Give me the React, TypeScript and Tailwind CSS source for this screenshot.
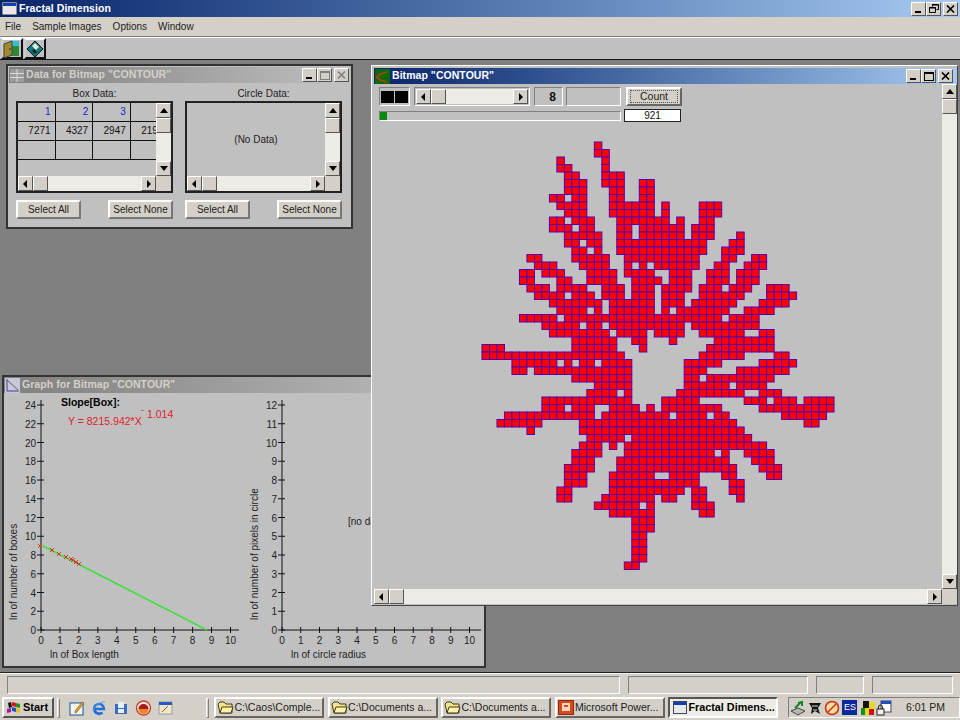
import type { ReactNode } from 'react'

const font = 'font-["Liberation_Sans",Arial,sans-serif]'

// fractal cells, one entry per row: [first column, last column] pairs
const cellRows: number[][] = [
  [15, 15],
  [15, 16],
  [10, 10, 16, 16],
  [10, 11, 16, 16],
  [11, 12, 16, 18],
  [11, 13, 16, 18, 21, 22],
  [11, 13, 17, 18, 21, 22],
  [9, 10, 12, 13, 17, 18, 21, 22],
  [10, 13, 17, 22, 24, 24, 29, 31],
  [11, 13, 17, 22, 24, 24, 29, 31],
  [9, 10, 12, 14, 18, 24, 26, 26, 29, 30],
  [9, 11, 13, 14, 18, 19, 21, 26, 28, 30],
  [11, 15, 18, 19, 21, 26, 28, 30, 34, 34],
  [11, 12, 14, 15, 18, 29, 33, 34],
  [12, 13, 15, 15, 18, 29, 32, 34],
  [6, 7, 12, 16, 19, 28, 32, 33, 36, 37],
  [7, 9, 13, 16, 19, 19, 21, 21, 23, 28, 31, 32, 35, 37],
  [5, 6, 8, 10, 14, 17, 19, 22, 25, 27, 30, 32, 34, 36],
  [5, 6, 10, 11, 14, 17, 20, 23, 25, 27, 30, 32, 34, 36],
  [6, 8, 10, 13, 16, 18, 20, 22, 24, 27, 29, 31, 33, 35, 38, 40],
  [7, 10, 12, 14, 16, 18, 20, 22, 24, 26, 29, 34, 38, 41],
  [9, 15, 17, 22, 24, 26, 28, 33, 37, 40],
  [10, 13, 15, 15, 17, 22, 24, 24, 26, 32, 35, 38],
  [5, 9, 11, 31, 33, 36],
  [8, 12, 14, 15, 17, 26, 28, 36],
  [9, 16, 18, 21, 23, 26, 29, 34, 37, 38],
  [12, 17, 20, 21, 25, 25, 31, 38],
  [0, 2, 12, 17, 21, 21, 30, 38],
  [0, 18, 29, 34, 39, 40],
  [4, 9, 11, 11, 13, 14, 16, 19, 27, 31, 37, 41],
  [4, 5, 7, 19, 27, 29, 34, 40],
  [12, 19, 27, 28, 30, 38],
  [15, 19, 27, 32, 34, 37],
  [14, 17, 19, 19, 26, 34, 37, 39],
  [8, 19, 24, 28, 35, 37, 39, 41, 43, 46],
  [8, 10, 12, 14, 17, 20, 22, 22, 24, 31, 37, 46],
  [3, 14, 16, 24, 26, 29, 31, 32, 40, 45],
  [2, 7, 13, 33, 43, 44],
  [6, 6, 13, 34],
  [14, 18, 20, 35],
  [13, 15, 17, 17, 19, 37],
  [12, 15, 19, 30, 32, 32, 35, 38],
  [12, 14, 18, 32, 36, 38],
  [11, 14, 18, 33, 37, 39],
  [11, 13, 17, 22, 25, 28, 32, 33, 38, 39],
  [11, 13, 17, 28, 33, 34],
  [10, 11, 17, 26, 28, 29, 33, 34],
  [10, 11, 16, 22, 24, 25, 28, 29, 34, 34],
  [15, 20, 22, 22, 28, 30],
  [17, 22, 29, 30],
  [20, 22],
  [20, 22],
  [20, 21],
  [20, 21],
  [20, 21],
  [20, 21],
  [19, 20],
]

const cells = cellRows.flatMap((ranges, row) => {
  const out: { c: number; r: number }[] = []
  for (let i = 0; i < ranges.length; i += 2) {
    for (let c = ranges[i]; c <= ranges[i + 1]; c++) out.push({ c, r: row })
  }
  return out
})

function Fractal() {
  return (
    <svg width="354" height="430" viewBox="0 0 354 430" className="absolute left-[107px] top-[57px]">
      {cells.map(({ c, r }) => (
        <rect
          key={`${c}-${r}`}
          x={c * 7.49 + 1}
          y={r * 7.5 + 1}
          width="7.49"
          height="7.5"
          fill="#ff0000"
          stroke="#5500b4"
          strokeWidth="1"
        />
      ))}
    </svg>
  )
}

const raised = 'border border-t-white border-l-white border-r-[#555] border-b-[#555]'
const sunken = 'border border-t-[#808080] border-l-[#808080] border-r-white border-b-white'

type Dir = 'up' | 'down' | 'left' | 'right'

function Arrow({ dir }: { dir: Dir }) {
  const pts = {
    up: '4,1 8,6 0,6',
    down: '0,1 8,1 4,6',
    left: '5,0 5,8 1,4',
    right: '2,0 2,8 6,4',
  }[dir]
  return (
    <svg width="8" height="8" viewBox="0 0 8 8">
      <polygon points={pts} fill="#000" />
    </svg>
  )
}

function ArrowBtn({ dir }: { dir: Dir }) {
  return (
    <div className={`flex h-[15px] w-[15px] shrink-0 items-center justify-center bg-[#d4d0c8] ${raised}`}>
      <Arrow dir={dir} />
    </div>
  )
}

function VScroll() {
  return (
    <div className="flex h-full w-[15px] shrink-0 flex-col bg-[#ecebe6]">
      <ArrowBtn dir="up" />
      <div className={`h-[15px] w-[15px] shrink-0 bg-[#d4d0c8] ${raised}`} />
      <div className="flex-1" />
      <ArrowBtn dir="down" />
    </div>
  )
}

function HScroll() {
  return (
    <div className="flex h-[15px] w-full shrink-0 bg-[#ecebe6]">
      <ArrowBtn dir="left" />
      <div className={`h-[15px] w-[15px] shrink-0 bg-[#d4d0c8] ${raised}`} />
      <div className="flex-1" />
      <ArrowBtn dir="right" />
    </div>
  )
}

function CaptionBtns({ active, restore }: { active: boolean; restore?: boolean }) {
  const ink = active ? '#000' : '#808080'
  return (
    <div className="flex items-center">
      <div className={`flex h-[14px] w-[15px] items-end justify-start bg-[#d4d0c8] pb-[2px] pl-[3px] ${raised}`}>
        <div className="h-[2px] w-[6px] bg-black" />
      </div>
      <div className={`flex h-[14px] w-[15px] items-center justify-center bg-[#d4d0c8] ${raised}`}>
        {restore ? (
          <svg width="10" height="9" viewBox="0 0 10 9" fill="none" stroke="#000">
            <path d="M3.5 2.5V.5h6v5H7.5" />
            <path d="M.5 3.5h6v5h-6z" />
            <path d="M3 1h6M0 4h7" />
          </svg>
        ) : (
          <div className="h-[9px] w-[10px] border border-t-2" style={{ borderColor: ink }} />
        )}
      </div>
      <div className={`ml-[2px] flex h-[14px] w-[15px] items-center justify-center bg-[#d4d0c8] ${raised}`}>
        <svg width="9" height="8" viewBox="0 0 9 8" stroke={ink} strokeWidth="1.6">
          <path d="M1 .5l7 7M8 .5l-7 7" />
        </svg>
      </div>
    </div>
  )
}

function Titlebar({ title, active, icon, restore, className }: { title: string; active: boolean; icon: ReactNode; restore?: boolean; className: string }) {
  return (
    <div className={`flex items-center justify-between pl-[1px] ${className} ${active ? 'bg-gradient-to-r from-[#0a246a] to-[#a6caf0] text-white' : 'bg-gradient-to-r from-[#808080] to-[#c0c0c0] text-[#d4d0c8]'}`}>
      <div className="flex items-center gap-[2px] text-[10.5px] font-bold tracking-[0.05px]">
        {icon}
        <span>{title}</span>
      </div>
      <CaptionBtns active={active} restore={restore} />
    </div>
  )
}

function WinBtn({ label, className = '' }: { label: string; className?: string }) {
  return (
    <div className={`flex h-[19px] w-[65px] items-center justify-center bg-[#d4d0c8] text-[10px] text-[#222] border-2 border-t-white border-l-white border-r-[#777] border-b-[#777] ${className}`}>
      {label}
    </div>
  )
}

function Grid3() {
  const rows = [['1', '2', '3', ''], ['7271', '4327', '2947', '2190'], ['', '', '', '']]
  return (
    <div className="flex h-full w-full flex-col">
      <div className="flex min-h-0 flex-1">
        <div className="flex-1 overflow-hidden">
          <div className="flex w-[170px] flex-col">
            {rows.map((row, i) => (
              <div key={i} className="flex h-[19px] border-b border-[#111]">
                {row.map((cell, j) => (
                  <div key={j} className={`h-full w-[37.6px] shrink-0 border-r border-[#111] pr-[4px] pt-[2px] text-right text-[10px] leading-[14px] ${i === 0 ? 'text-[#2020c8]' : 'text-[#111]'}`}>
                    {cell}
                  </div>
                ))}
              </div>
            ))}
          </div>
        </div>
        <VScroll />
      </div>
      <div className="flex">
        <div className="min-w-0 flex-1">
          <HScroll />
        </div>
        <div className="h-[15px] w-[15px] bg-[#d4d0c8]" />
      </div>
    </div>
  )
}

function NoData() {
  return (
    <div className="flex h-full w-full flex-col">
      <div className="flex min-h-0 flex-1">
        <div className="flex-1 pt-[29px] text-center text-[10px] text-[#222]">(No Data)</div>
        <VScroll />
      </div>
      <div className="flex">
        <div className="min-w-0 flex-1">
          <HScroll />
        </div>
        <div className="h-[15px] w-[15px] bg-[#d4d0c8]" />
      </div>
    </div>
  )
}

function DataWindow() {
  const gridIcon = (
    <svg width="14" height="13" viewBox="0 0 14 13">
      <rect width="14" height="13" fill="#9c9c9c" />
      <path d="M0 4.5h14M0 8.5h14M7 0v13" stroke="#dcdcdc" />
    </svg>
  )
  return (
    <div className="absolute left-[6px] top-[4px] h-[165px] w-[347px] border-2 border-[#333] bg-[#c0c0c0] p-[1px]">
      <Titlebar title={'Data for Bitmap "CONTOUR"'} active={false} icon={gridIcon} className="h-[16px] pr-[1px]" />
      <div className="grid grid-cols-[157px_157px] justify-between pl-[7px] pr-[8px]">
        <div className="flex flex-col">
          <div className="h-[18px] pt-[3px] text-center text-[10px] text-[#222]">Box Data:</div>
          <div className="h-[92px] border-2 border-[#222]"><Grid3 /></div>
          <div className="mt-[7px] flex justify-between">
            <WinBtn label="Select All" />
            <WinBtn label="Select None" />
          </div>
        </div>
        <div className="flex flex-col">
          <div className="h-[18px] pt-[3px] text-center text-[10px] text-[#222]">Circle Data:</div>
          <div className="h-[92px] border-2 border-[#222]"><NoData /></div>
          <div className="mt-[7px] flex justify-between">
            <WinBtn label="Select All" />
            <WinBtn label="Select None" />
          </div>
        </div>
      </div>
    </div>
  )
}

function GraphWindow() {
  const leftY = Array.from({ length: 13 }, (_, i) => i * 2)
  const rightY = Array.from({ length: 13 }, (_, i) => i)
  const xs = Array.from({ length: 11 }, (_, i) => i)
  const marks = [[40, 546], [52, 550], [59, 554], [66, 557], [71, 559], [73, 560], [76, 562], [79, 564]]
  const icon = (
    <svg width="15" height="15" viewBox="0 0 15 15">
      <rect width="15" height="15" fill="#c8c8d8" />
      <path d="M2 1v12h12" stroke="#4040a0" fill="none" />
      <path d="M2 2l11 10" stroke="#606060" />
    </svg>
  )
  return (
    <div className="absolute left-[2px] top-[315px] flex h-[293px] w-[484px] flex-col border-2 border-[#333] bg-[#c0c0c0]">
      <Titlebar title={'Graph for Bitmap "CONTOUR"'} active={false} icon={icon} className="h-[16px] shrink-0" />
      <svg width="480" height="273" viewBox="4 393 480 273" className="shrink-0">
        <g fontSize="10" fill="#222" fontFamily="Liberation Sans, Arial, sans-serif">
          <path d="M41 400V630H239" stroke="#111" fill="none" />
          {leftY.map((v, i) => {
            const y = 630 - i * 18.75
            return (
              <g key={v}>
                <path d={`M37 ${y}H44`} stroke="#111" />
                <text x="36" y={y + 4} textAnchor="end">{v}</text>
              </g>
            )
          })}
          {xs.map((v) => {
            const x = 41 + v * 18.95
            return (
              <g key={v}>
                <path d={`M${x} 627V633`} stroke="#111" />
                <text x={x} y="644" textAnchor="middle">{v}</text>
              </g>
            )
          })}
          <text transform="translate(17 620) rotate(-90)">ln of number of boxes</text>
          <text x="50" y="658">ln of Box length</text>
          <text x="61" y="406" fontWeight="bold" fontSize="10.5" fill="#000">Slope[Box]:</text>
          <text x="68" y="425" fill="#e0202c" fontSize="10.5">Y = 8215.942*X</text>
          <text x="141" y="413" fill="#e0202c" fontSize="9">-</text>
          <text x="147" y="418" fill="#e0202c" fontSize="10.5">1.014</text>
          <path d="M41 545L207 630" stroke="#3fe03f" strokeWidth="1.5" />
          {marks.map(([x, y]) => (
            <path key={x} d={`M${x - 2} ${y - 2}l4 4M${x + 2} ${y - 2}l-4 4`} stroke="#e0302c" />
          ))}

          <path d="M282 400V630H481" stroke="#111" fill="none" />
          {rightY.map((v, i) => {
            const y = 630 - i * 18.75
            return (
              <g key={v}>
                <path d={`M278 ${y}H285`} stroke="#111" />
                <text x="277" y={y + 4} textAnchor="end">{v}</text>
              </g>
            )
          })}
          {xs.map((v) => {
            const x = 282 + v * 18.75
            return (
              <g key={v}>
                <path d={`M${x} 627V633`} stroke="#111" />
                <text x={x} y="644" textAnchor="middle">{v}</text>
              </g>
            )
          })}
          <text transform="translate(258 620) rotate(-90)">ln of number of pixels in circle</text>
          <text x="291" y="658">ln of circle radius</text>
          <text x="348" y="525">[no data]</text>
        </g>
      </svg>
    </div>
  )
}

function BitmapWindow() {
  const icon = (
    <svg width="15" height="15" viewBox="0 0 15 15">
      <rect width="15" height="15" fill="#0a6a0a" />
      <path d="M12 3L5 5 2 8l3 3 7 2" stroke="#b04010" strokeWidth="1.8" fill="none" />
    </svg>
  )
  return (
    <div className="absolute left-[371px] top-[5px] flex h-[541px] w-[587px] flex-col border border-t-white border-l-white border-r-[#444] border-b-[#444] bg-[#c0c0c0] pb-[1px] pl-[2px] pt-[2px]">
      <Titlebar title={'Bitmap "CONTOUR"'} active icon={icon} className="h-[16px] shrink-0 pr-[4px]" />
      <div className="flex min-h-0 flex-1">
        <div className="relative min-w-0 flex-1 overflow-hidden">
          <div className="ml-[5px] mt-[3px] flex h-[19px] items-center">
            <div className={`flex h-[19px] w-[31px] items-center justify-center gap-[1px] ${sunken}`}>
              <div className="h-[12px] w-[13px] bg-black" />
              <div className="h-[12px] w-[13px] bg-black" />
            </div>
            <div className={`ml-[4px] flex h-[19px] w-[116px] items-center px-[1px] ${sunken}`}>
              <HScroll />
            </div>
            <div className={`ml-[4px] flex h-[19px] w-[29px] items-center justify-end pr-[6px] text-[12px] font-bold text-[#111] ${sunken}`}>8</div>
            <div className={`ml-[3px] h-[19px] w-[55px] ${sunken}`} />
            <div className="ml-[5px] flex h-[19px] w-[56px] items-center justify-center border-2 border-t-white border-l-white border-r-[#666] border-b-[#666] bg-[#d4d0c8] text-[10.5px] text-[#222]">
              <span className="flex h-[13px] w-[48px] items-center justify-center border border-dotted border-[#555]">Count</span>
            </div>
          </div>
          <div className="ml-[5px] mt-[3px] flex h-[13px] items-center">
            <div className={`h-[10px] w-[242px] bg-[#c0c0c0] ${sunken}`}>
              <div className="h-full w-[7px] bg-[#0a8a10]" />
            </div>
            <div className="ml-[3px] flex h-[13px] w-[57px] items-center justify-center border border-[#222] bg-white text-[10px] leading-none text-[#111]">921</div>
          </div>
          <Fractal />
        </div>
        <VScroll />
      </div>
      <div className="flex shrink-0">
        <div className="min-w-0 flex-1">
          <HScroll />
        </div>
        <div className="h-[15px] w-[15px] bg-[#d4d0c8]" />
      </div>
    </div>
  )
}

function Folder() {
  return (
    <svg width="17" height="14" viewBox="0 0 17 14" className="shrink-0">
      <path d="M1 3l2-2h4l2 2h6v9H3z" fill="#f5e38a" stroke="#3a3a20" />
      <path d="M3 12l2-6h11l-2 6z" fill="#fff1a8" stroke="#3a3a20" />
    </svg>
  )
}

function Task({ label, icon, active }: { label: string; icon: ReactNode; active?: boolean }) {
  return (
    <div className={`flex h-[21px] w-[110px] shrink-0 items-center overflow-hidden whitespace-nowrap pl-[1px] ${active ? 'border-2 border-t-[#555] border-l-[#555] border-r-white border-b-white bg-[#eeece6] pl-[3px] text-[10.8px] font-bold text-black' : 'border-2 border-t-white border-l-white border-r-[#666] border-b-[#666] bg-[#d4d0c8] text-[10.5px] text-[#222]'}`}>
      {icon}
      <span>{label}</span>
    </div>
  )
}

function TrayIcons() {
  return (
    <div className="flex items-center gap-[1px]">
      <svg width="16" height="16" viewBox="0 0 16 16"><path d="M1 11l7-3 7 3-7 4z" fill="#b8b8b0" stroke="#444" /><path d="M5 8l6-6M8 3l4-1 0 4" stroke="#118a22" strokeWidth="2" fill="none" /></svg>
      <svg width="16" height="16" viewBox="0 0 16 16"><path d="M2 3h12l-3 5 2 6-5-3-4 3 1-6z" fill="#111" /><path d="M5 6h6M6 10h4" stroke="#ddd" /></svg>
      <svg width="16" height="16" viewBox="0 0 16 16"><circle cx="8" cy="8" r="6.5" fill="#f6dca0" stroke="#d03018" strokeWidth="1.6" /><path d="M4 12L12 4" stroke="#d03018" strokeWidth="1.6" /></svg>
      <div className="ml-[1px] flex h-[15px] w-[15px] items-center justify-center bg-[#0a2a9a] text-[9px] text-white">ES</div>
      <svg width="15" height="15" viewBox="0 0 15 15" className="ml-[2px]"><rect x="3" y="1" width="6" height="7" fill="#111" /><rect x="9" y="2" width="6" height="7" fill="#e8d820" /><rect x="1" y="8" width="4" height="7" fill="#109020" /><rect x="5" y="8" width="4" height="7" fill="#e8d820" /><rect x="9" y="9" width="5" height="6" fill="#c81010" /></svg>
      <svg width="16" height="16" viewBox="0 0 16 16"><rect x="5" y="1" width="10" height="11" fill="#fff" stroke="#445" /><rect x="5" y="1" width="10" height="3" fill="#2050c8" /><rect x="1" y="9" width="7" height="6" fill="#f0f0e8" stroke="#222" /><path d="M2.5 9V7a2 2 0 014 0v2" fill="none" stroke="#222" /></svg>
    </div>
  )
}

export default function App() {
  return (
    <div className={`${font} flex h-[720px] w-[960px] flex-col overflow-hidden bg-[#808080]`}>
      <Titlebar
        title="Fractal Dimension"
        active
        restore
        icon={
          <svg width="15" height="13" viewBox="0 0 15 13" className="ml-[1px]">
            <rect width="15" height="13" fill="#e8e8e8" stroke="#333" />
            <rect x="1" y="1" width="13" height="3" fill="#1040b0" />
          </svg>
        }
        className="h-[17px] shrink-0 pr-[2px]"
      />
      <div className="flex h-[20px] shrink-0 items-center gap-[11px] border-b border-[#808080] bg-[#d4d0c8] pl-[5px] text-[10px] text-[#222]">
        <span>File</span>
        <span>Sample Images</span>
        <span>Options</span>
        <span>Window</span>
      </div>
      <div className="flex h-[23px] shrink-0 items-start gap-[1px] border-y border-t-white border-b-[#111] bg-[#c0c0c0] pl-[1px]">
        <div className="flex h-[21px] w-[22px] items-center justify-center border-2 border-t-white border-l-[#ccc] border-r-[#111] border-b-[#111] bg-[#c0c0c0]">
          <svg width="18" height="18" viewBox="0 0 18 18">
            <rect x="6" y="1" width="10" height="15" fill="#2a8a3a" />
            <rect x="6" y="1" width="10" height="5" fill="#30c0d8" />
            <path d="M1 4l8-3v14l-8 3z" fill="#a08a30" stroke="#443" />
            <path d="M7 8v2" stroke="#222" />
          </svg>
        </div>
        <div className="flex h-[21px] w-[22px] items-center justify-center border-2 border-t-white border-l-[#ccc] border-r-[#111] border-b-[#111] bg-[#c0c0c0]">
          <svg width="18" height="18" viewBox="0 0 18 18">
            <path d="M1 9l8-8 8 8-8 8z" fill="#0a7a80" stroke="#111" />
            <path d="M6 6l3-3 4 4-3 3z" fill="#e8e8d0" />
            <path d="M6 11l2-2 3 3-2 2z" fill="#1a1a1a" />
          </svg>
        </div>
      </div>
      <div className="relative min-h-0 flex-1 border-b border-[#222]">
        <DataWindow />
        <GraphWindow />
        <BitmapWindow />
      </div>
      <div className="flex h-[22px] shrink-0 items-center gap-[8px] border-t border-[#eee] bg-[#d4d0c8] pl-[7px]">
        <div className={`h-[18px] w-[613px] ${sunken}`} />
        <div className={`h-[18px] w-[180px] ${sunken}`} />
        <div className={`h-[18px] w-[48px] ${sunken}`} />
        <div className={`h-[18px] w-[81px] ${sunken}`} />
      </div>
      <div className="flex h-[25px] shrink-0 items-center bg-[#d4d0c8] pl-[2px] text-[#222]">
        <div className="flex h-[21px] w-[52px] items-center gap-[1px] border-2 border-t-white border-l-white border-r-[#555] border-b-[#555] pl-[2px] text-[11px] font-bold text-black">
          <svg width="16" height="14" viewBox="0 0 16 14" className="shrink-0">
            <path d="M2 2l3-1 1 5-3 1z" fill="#111" />
            <path d="M6 1l4 1v4l-4-1z" fill="#d81818" />
            <path d="M10 2l4 1v4l-4-1z" fill="#209020" />
            <path d="M6 6l4 1v4l-4-1z" fill="#2050c0" />
            <path d="M10 7l4 1v4l-4-1z" fill="#e8c020" />
            <path d="M1 8l4-1v4l-4 1z" fill="#a018a0" />
          </svg>
          Start
        </div>
        <div className="ml-[3px] h-[20px] w-[3px] border border-t-white border-l-white border-r-[#808080] border-b-[#808080]" />
        <div className="ml-[9px] flex w-[137px] items-center gap-[6px]">
          <svg width="16" height="16" viewBox="0 0 16 16"><rect x="1" y="3" width="13" height="12" fill="#f4f4e8" stroke="#1850a0" /><path d="M6 11l7-9 2 1-7 9-2 1z" fill="#e8a020" stroke="#443" strokeWidth=".5" /></svg>
          <svg width="16" height="16" viewBox="0 0 16 16" fill="none"><path d="M3 9h10a5 5 0 1 0-1.5 3.5" stroke="#2070d8" strokeWidth="2.4" /><path d="M3 9a5 5 0 0 1 0 0c1 4 5 5 8 4" stroke="#2070d8" strokeWidth="2" /><path d="M14 2c-3-1-9 2-12 9" stroke="#60a8e8" /></svg>
          <svg width="16" height="16" viewBox="0 0 16 16"><rect x="2" y="4" width="12" height="10" fill="#3870c0" /><rect x="5" y="2" width="6" height="6" fill="#e8eef8" /><rect x="5" y="9" width="6" height="4" fill="#e8eef8" /></svg>
          <svg width="17" height="16" viewBox="0 0 17 16"><circle cx="8.5" cy="8" r="7" fill="#f0e8e0" stroke="#d04030" strokeWidth="1.4" /><path d="M3.5 9a5 5 0 0110 0z" fill="#a81818" /><path d="M3.5 9h10a5 5 0 01-10 0z" fill="#e88820" /></svg>
          <svg width="15" height="15" viewBox="0 0 15 15"><rect x="1" y="2" width="13" height="12" fill="#f0e8c8" stroke="#99a" /><rect x="1" y="2" width="13" height="3" fill="#2858c8" /><path d="M4 12l6-6" stroke="#c04040" /></svg>
        </div>
        <div className="ml-[1px] h-[20px] w-[3px] border border-t-white border-l-white border-r-[#808080] border-b-[#808080]" />
        <div className="ml-[5px] flex gap-[3.5px]">
          <Task label="C:\Caos\Comple..." icon={<Folder />} />
          <Task label="C:\Documents a..." icon={<Folder />} />
          <Task label="C:\Documents a..." icon={<Folder />} />
          <Task
            label="Microsoft Power..."
            icon={
              <svg width="16" height="15" viewBox="0 0 16 15" className="mr-[1px] shrink-0">
                <rect x=".5" y=".5" width="15" height="14" fill="#d8481c" stroke="#8a2a10" />
                <rect x="4" y="3" width="8" height="8" fill="#f8d8c0" />
                <path d="M6 5h4v2H6z" fill="#d8481c" />
              </svg>
            }
          />
          <Task
            active
            label="Fractal Dimens..."
            icon={
              <svg width="15" height="13" viewBox="0 0 15 13" className="shrink-0">
                <rect x=".5" y=".5" width="13" height="12" fill="#e8e8f0" stroke="#445" />
                <rect x="1" y="1" width="12" height="3" fill="#1040b0" />
              </svg>
            }
          />
        </div>
        <div className={`ml-[10px] flex h-[21px] w-[172px] items-center justify-between pl-[1px] pr-[14px] text-[10.5px] ${sunken}`}>
          <TrayIcons />
          <span>6:01 PM</span>
        </div>
      </div>
    </div>
  )
}
